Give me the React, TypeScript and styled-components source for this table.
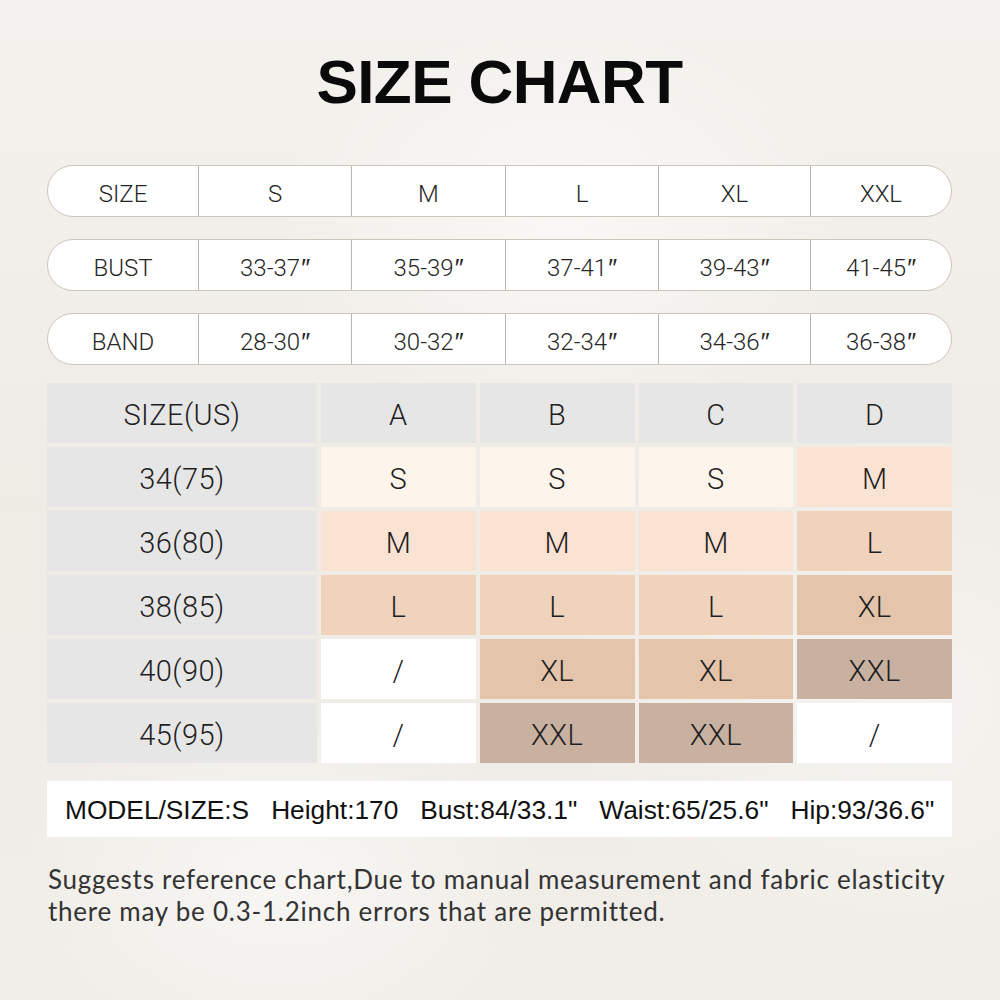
import React from "react";
import styled, { createGlobalStyle } from "styled-components";

const GlobalStyle = createGlobalStyle`
  html, body { margin: 0; padding: 0; }
  body { width: 1000px; height: 1000px; overflow: hidden; }
`;

const Page = styled.div`
  width: 1000px;
  height: 1000px;
  box-sizing: border-box;
  padding: 0 48px 0 47px;
  display: flex;
  flex-direction: column;
  background:
    radial-gradient(ellipse 420px 300px at 560px 230px, rgba(255,255,255,0.55), rgba(255,255,255,0) 70%),
    radial-gradient(ellipse 380px 260px at 280px 880px, rgba(255,255,255,0.5), rgba(255,255,255,0) 70%),
    radial-gradient(ellipse 500px 400px at 900px 700px, rgba(255,255,255,0.35), rgba(255,255,255,0) 70%),
    linear-gradient(180deg, #f4f2ee 0%, #efece6 50%, #f1eee9 100%);
`;

const Title = styled.h1`
  margin: 51px 0 0;
  font-family: "Liberation Sans", Arial, sans-serif;
  font-weight: 700;
  font-size: 62px;
  line-height: 62px;
  letter-spacing: -0.6px;
  text-align: center;
  color: #0a0a0a;
`;

const PillStack = styled.div`
  margin-top: 52px;
  display: flex;
  flex-direction: column;
  gap: 22px;
`;

const Pill = styled.div`
  height: 52px;
  box-sizing: border-box;
  display: grid;
  grid-template-columns: 150px 153px 154px 153px 152px 1fr;
  background: #ffffff;
  border: 1px solid #cdc5ba;
  border-radius: 26px;
  overflow: hidden;
`;

const PillCell = styled.div`
  display: flex;
  align-items: center;
  justify-content: center;
  padding-top: 6px;
  font-family: Roboto, "Liberation Sans", sans-serif;
  font-weight: 300;
  font-size: 24px;
  color: #262626;
  border-left: 1px solid #b9b4ae;
  &:first-child { border-left: none; }
`;

const Inch = styled.span`
  font-family: "DejaVu Sans", sans-serif;
  font-weight: 300;
  font-size: 25px;
  margin-left: 1px;
`;

const Table = styled.div`
  margin-top: 18px;
  display: grid;
  grid-template-columns: 270px repeat(4, 1fr);
  grid-auto-rows: 60px;
  gap: 4px;
`;

const Cell = styled.div<{ $bg: string }>`
  background: ${(p) => p.$bg};
  display: flex;
  align-items: center;
  justify-content: center;
  padding-top: 3px;
  font-family: Roboto, "Liberation Sans", sans-serif;
  font-weight: 300;
  font-size: 29px;
  letter-spacing: 0.4px;
  color: #1f1f1f;
`;

const ModelBar = styled.div`
  margin-top: 18px;
  height: 56px;
  background: #ffffff;
  display: flex;
  align-items: center;
  gap: 22px;
  padding-left: 18px;
  padding-top: 2px;
  box-sizing: border-box;
  font-family: "Liberation Sans", Arial, sans-serif;
  font-size: 26.3px;
  letter-spacing: 0;
  color: #111;
  white-space: nowrap;
`;

const Note = styled.p`
  margin: 26px 0 0 1px;
  font-family: Lato, "Open Sans", sans-serif;
  font-weight: 400;
  font-size: 26px;
  line-height: 32px;
  letter-spacing: 0.75px;
  color: #333;
`;

const pillRows = [
  ["SIZE", "S", "M", "L", "XL", "XXL"],
  ["BUST", "33-37″", "35-39″", "37-41″", "39-43″", "41-45″"],
  ["BAND", "28-30″", "30-32″", "32-34″", "34-36″", "36-38″"],
];

const C = {
  gray: "#e6e6e6",
  S: "#fdf4ec",
  M: "#fbe3d3",
  L: "#f0d3bd",
  XL: "#e4c4ab",
  XXL: "#c9b1a1",
  none: "#ffffff",
};

type Key = keyof typeof C;

const tableRows: { label: string; cells: [string, Key][] }[] = [
  { label: "34(75)", cells: [["S", "S"], ["S", "S"], ["S", "S"], ["M", "M"]] },
  { label: "36(80)", cells: [["M", "M"], ["M", "M"], ["M", "M"], ["L", "L"]] },
  { label: "38(85)", cells: [["L", "L"], ["L", "L"], ["L", "L"], ["XL", "XL"]] },
  { label: "40(90)", cells: [["/", "none"], ["XL", "XL"], ["XL", "XL"], ["XXL", "XXL"]] },
  { label: "45(95)", cells: [["/", "none"], ["XXL", "XXL"], ["XXL", "XXL"], ["/", "none"]] },
];

const modelItems = [
  "MODEL/SIZE:S",
  "Height:170",
  'Bust:84/33.1"',
  'Waist:65/25.6"',
  'Hip:93/36.6"',
];

function PillText({ text }: { text: string }) {
  if (text.endsWith("″")) {
    return (
      <>
        {text.slice(0, -1)}
        <Inch>″</Inch>
      </>
    );
  }
  return <>{text}</>;
}

export default function App() {
  return (
    <>
      <GlobalStyle />
      <Page>
        <Title>SIZE CHART</Title>
        <PillStack>
          {pillRows.map((row, i) => (
            <Pill key={i}>
              {row.map((t, j) => (
                <PillCell key={j}>
                  <PillText text={t} />
                </PillCell>
              ))}
            </Pill>
          ))}
        </PillStack>
        <Table>
          {["SIZE(US)", "A", "B", "C", "D"].map((h) => (
            <Cell key={h} $bg={C.gray}>{h}</Cell>
          ))}
          {tableRows.map((r) => (
            <React.Fragment key={r.label}>
              <Cell $bg={C.gray}>{r.label}</Cell>
              {r.cells.map(([t, k], j) => (
                <Cell key={j} $bg={C[k]}>{t}</Cell>
              ))}
            </React.Fragment>
          ))}
        </Table>
        <ModelBar>
          {modelItems.map((m) => (
            <span key={m}>{m}</span>
          ))}
        </ModelBar>
        <Note>
          Suggests reference chart,Due to manual measurement and fabric elasticity
          <br />
          there may be 0.3-1.2inch errors that are permitted.
        </Note>
      </Page>
    </>
  );
}
